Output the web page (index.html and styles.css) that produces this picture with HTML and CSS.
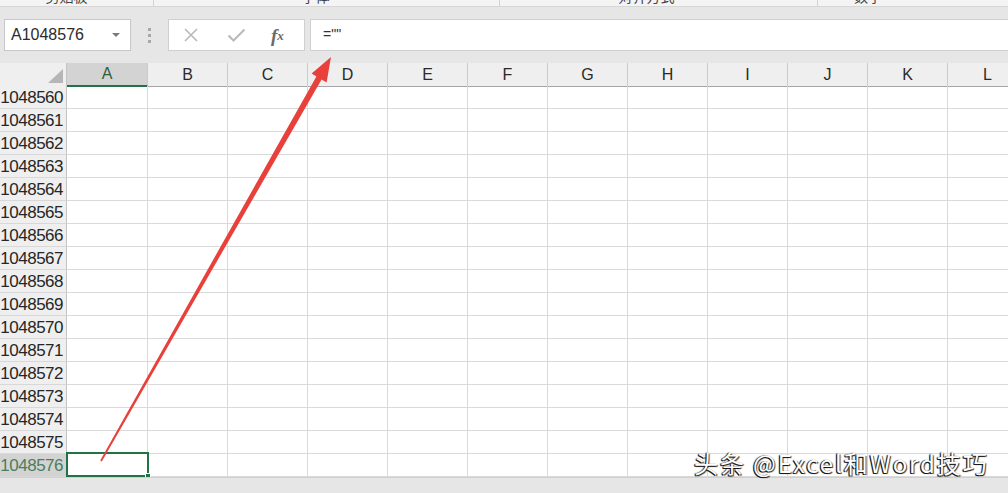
FILE: index.html
```html
<!DOCTYPE html>
<html lang="zh-CN">
<head>
<meta charset="utf-8">
<title>Excel</title>
<link rel="stylesheet" href="styles.css">
</head>
<body>
<div class="app">
  <div class="ribbon-tail">
    <div class="grp g1"><span>剪贴板</span></div>
    <div class="grp g2"><span>字体</span></div>
    <div class="grp g3"><span>对齐方式</span></div>
    <div class="grp g4"><span>数字</span></div>
  </div>

  <div class="fbar">
    <div class="namebox">
      <span class="ref">A1048576</span>
      <span class="caret"></span>
    </div>
    <div class="grip"><i></i><i></i><i></i></div>
    <div class="btns">
      <span class="btn cancel">
        <svg width="16" height="16" viewBox="0 0 16 16"><path d="M2 2L14 14M14 2L2 14" stroke="#b9b9b9" stroke-width="1.6" fill="none"/></svg>
      </span>
      <span class="btn ok">
        <svg width="19" height="16" viewBox="0 0 19 16"><path d="M1.5 8.5L6.5 13.5L17.5 2.5" stroke="#b9b9b9" stroke-width="2" fill="none"/></svg>
      </span>
      <span class="btn fx">f<sub>x</sub></span>
    </div>
    <div class="formula">=""</div>
  </div>

  <div class="sheet">
    <div class="row hdr">
      <div class="corner"><span class="tri"></span></div>
      <div class="ch sel">A</div><div class="ch">B</div><div class="ch">C</div><div class="ch">D</div>
      <div class="ch">E</div><div class="ch">F</div><div class="ch">G</div><div class="ch">H</div>
      <div class="ch">I</div><div class="ch">J</div><div class="ch">K</div><div class="ch">L</div>
    </div>
    <div class="row"><div class="rh">1048560</div><div class="c"></div><div class="c"></div><div class="c"></div><div class="c"></div><div class="c"></div><div class="c"></div><div class="c"></div><div class="c"></div><div class="c"></div><div class="c"></div><div class="c"></div><div class="c"></div></div>
    <div class="row"><div class="rh">1048561</div><div class="c"></div><div class="c"></div><div class="c"></div><div class="c"></div><div class="c"></div><div class="c"></div><div class="c"></div><div class="c"></div><div class="c"></div><div class="c"></div><div class="c"></div><div class="c"></div></div>
    <div class="row"><div class="rh">1048562</div><div class="c"></div><div class="c"></div><div class="c"></div><div class="c"></div><div class="c"></div><div class="c"></div><div class="c"></div><div class="c"></div><div class="c"></div><div class="c"></div><div class="c"></div><div class="c"></div></div>
    <div class="row"><div class="rh">1048563</div><div class="c"></div><div class="c"></div><div class="c"></div><div class="c"></div><div class="c"></div><div class="c"></div><div class="c"></div><div class="c"></div><div class="c"></div><div class="c"></div><div class="c"></div><div class="c"></div></div>
    <div class="row"><div class="rh">1048564</div><div class="c"></div><div class="c"></div><div class="c"></div><div class="c"></div><div class="c"></div><div class="c"></div><div class="c"></div><div class="c"></div><div class="c"></div><div class="c"></div><div class="c"></div><div class="c"></div></div>
    <div class="row"><div class="rh">1048565</div><div class="c"></div><div class="c"></div><div class="c"></div><div class="c"></div><div class="c"></div><div class="c"></div><div class="c"></div><div class="c"></div><div class="c"></div><div class="c"></div><div class="c"></div><div class="c"></div></div>
    <div class="row"><div class="rh">1048566</div><div class="c"></div><div class="c"></div><div class="c"></div><div class="c"></div><div class="c"></div><div class="c"></div><div class="c"></div><div class="c"></div><div class="c"></div><div class="c"></div><div class="c"></div><div class="c"></div></div>
    <div class="row"><div class="rh">1048567</div><div class="c"></div><div class="c"></div><div class="c"></div><div class="c"></div><div class="c"></div><div class="c"></div><div class="c"></div><div class="c"></div><div class="c"></div><div class="c"></div><div class="c"></div><div class="c"></div></div>
    <div class="row"><div class="rh">1048568</div><div class="c"></div><div class="c"></div><div class="c"></div><div class="c"></div><div class="c"></div><div class="c"></div><div class="c"></div><div class="c"></div><div class="c"></div><div class="c"></div><div class="c"></div><div class="c"></div></div>
    <div class="row"><div class="rh">1048569</div><div class="c"></div><div class="c"></div><div class="c"></div><div class="c"></div><div class="c"></div><div class="c"></div><div class="c"></div><div class="c"></div><div class="c"></div><div class="c"></div><div class="c"></div><div class="c"></div></div>
    <div class="row"><div class="rh">1048570</div><div class="c"></div><div class="c"></div><div class="c"></div><div class="c"></div><div class="c"></div><div class="c"></div><div class="c"></div><div class="c"></div><div class="c"></div><div class="c"></div><div class="c"></div><div class="c"></div></div>
    <div class="row"><div class="rh">1048571</div><div class="c"></div><div class="c"></div><div class="c"></div><div class="c"></div><div class="c"></div><div class="c"></div><div class="c"></div><div class="c"></div><div class="c"></div><div class="c"></div><div class="c"></div><div class="c"></div></div>
    <div class="row"><div class="rh">1048572</div><div class="c"></div><div class="c"></div><div class="c"></div><div class="c"></div><div class="c"></div><div class="c"></div><div class="c"></div><div class="c"></div><div class="c"></div><div class="c"></div><div class="c"></div><div class="c"></div></div>
    <div class="row"><div class="rh">1048573</div><div class="c"></div><div class="c"></div><div class="c"></div><div class="c"></div><div class="c"></div><div class="c"></div><div class="c"></div><div class="c"></div><div class="c"></div><div class="c"></div><div class="c"></div><div class="c"></div></div>
    <div class="row"><div class="rh">1048574</div><div class="c"></div><div class="c"></div><div class="c"></div><div class="c"></div><div class="c"></div><div class="c"></div><div class="c"></div><div class="c"></div><div class="c"></div><div class="c"></div><div class="c"></div><div class="c"></div></div>
    <div class="row"><div class="rh">1048575</div><div class="c"></div><div class="c"></div><div class="c"></div><div class="c"></div><div class="c"></div><div class="c"></div><div class="c"></div><div class="c"></div><div class="c"></div><div class="c"></div><div class="c"></div><div class="c"></div></div>
    <div class="row"><div class="rh sel">1048576</div><div class="c active"><span class="handle"></span></div><div class="c"></div><div class="c"></div><div class="c"></div><div class="c"></div><div class="c"></div><div class="c"></div><div class="c"></div><div class="c"></div><div class="c"></div><div class="c"></div><div class="c"></div></div>
  </div>

  <div class="bottom"></div>

  <svg class="arrow" width="1008" height="493" viewBox="0 0 1008 493">
    <polygon fill="#e8413b" points="331,57 326.6,82.4 321.6,79.4 101.8,461.5 100.2,460.5 316.4,76.4 311.6,73.6"/>
  </svg>

  <div class="watermark">头条 @Excel和Word技巧</div>
</div>
</body>
</html>
```

FILE: styles.css
```css
* { box-sizing: border-box; }

html, body {
  margin: 0;
  padding: 0;
  width: 1008px;
  height: 493px;
  overflow: hidden;
  background: #e6e6e6;
  font-family: "Liberation Sans", Arial, "Noto Sans CJK SC", sans-serif;
  color: #262626;
}

.app {
  position: relative;
  width: 1008px;
  height: 493px;
  overflow: hidden;
  display: flex;
  flex-direction: column;
}

/* bottom of the ribbon, cut off */
.ribbon-tail {
  height: 7px;
  flex: none;
  display: flex;
  background: #f4f4f4;
  border-bottom: 1px solid #d6d6d6;
  overflow: hidden;
}
.grp {
  height: 6px;
  overflow: hidden;
  border-right: 1px solid #d4d4d4;
  display: flex;
  justify-content: center;
  font-family: "Noto Sans CJK SC", sans-serif;
  font-size: 14px;
  color: #444;
}
.grp span { display: block; line-height: 14px; margin-top: -11px; }
.g1 { width: 154px; padding-right: 20px; }
.g2 { width: 346px; padding-right: 22px; }
.g3 { width: 318px; padding-right: 24px; }
.g4 { flex: 1; border-right: none; padding-right: 90px; }

/* formula bar */
.fbar {
  height: 56px;
  flex: none;
  display: flex;
  align-items: flex-start;
  padding: 12px 0 0 4px;
  background: #e6e6e6;
}
.namebox {
  width: 127px;
  height: 32px;
  background: #fff;
  border: 1px solid #c8c8c8;
  display: flex;
  align-items: center;
  justify-content: space-between;
  padding: 0 10px 0 6px;
  font-size: 16px;
  color: #2b2b2b;
}
.caret {
  width: 0; height: 0;
  border-left: 4px solid transparent;
  border-right: 4px solid transparent;
  border-top: 4px solid #7a7a7a;
}
.grip {
  width: 37px;
  height: 32px;
  display: flex;
  flex-direction: column;
  align-items: center;
  justify-content: center;
  gap: 3px;
}
.grip i {
  display: block;
  width: 3px; height: 3px;
  background: #a8a8a8;
}
.btns {
  width: 137px;
  height: 32px;
  background: #fff;
  border: 1px solid #cfcfcf;
  display: flex;
  align-items: center;
  padding-left: 14px;
}
.btn {
  display: flex;
  align-items: center;
}
.ok { margin-left: 28px; }
.fx {
  margin-left: 25px;
  font-family: "Liberation Serif", "DejaVu Serif", serif;
  font-style: italic;
  font-weight: bold;
  font-size: 19px;
  color: #6a6a6a;
  line-height: 1;
}
.fx sub { font-size: 13px; vertical-align: -2px; }
.formula {
  flex: 1;
  margin-left: 5px;
  margin-right: -20px;
  height: 32px;
  background: #fff;
  border: 1px solid #cfcfcf;
  padding: 5px 0 0 12px;
  font-size: 14px;
  line-height: 18px;
  color: #333;
}

/* sheet */
.sheet {
  flex: none;
  background: #fff;
  overflow: hidden;
}
.row {
  display: grid;
  grid-template-columns: 67px 81px repeat(11, 80px);
  height: 23px;
  width: 1028px;
}
.hdr { background: #efefef; }
.corner {
  background: #efefef;
  border-right: 1px solid #c4c4c4;
  border-bottom: 1px solid #a6a6a6;
  display: flex;
  align-items: flex-end;
  justify-content: flex-end;
  padding: 0 3px 3px 0;
}
.tri {
  width: 0; height: 0;
  border-left: 15px solid transparent;
  border-bottom: 14px solid #b6b6b6;
}
.ch {
  border-right: 1px solid #cbcbcb;
  border-bottom: 1px solid #a6a6a6;
  text-align: center;
  font-size: 16px;
  line-height: 23px;
  color: #2a2a2a;
}
.ch.sel {
  background: #d3d3d3;
  border-bottom: 2px solid #217346;
  color: #2e5e40;
  line-height: 22px;
}
.rh {
  background: #efefef;
  border-right: 1px solid #c4c4c4;
  border-bottom: 1px solid #d8d8d8;
  text-align: right;
  padding-right: 3px;
  font-size: 17px;
  letter-spacing: -0.5px;
  line-height: 23px;
  color: #262626;
  overflow: hidden;
  white-space: nowrap;
}
.rh.sel {
  background: #d3d3d3;
  color: #4b7d5c;
}
.c {
  border-right: 1px solid #dadada;
  border-bottom: 1px solid #dadada;
}
.c.active { position: relative; }
.c.active::after {
  content: "";
  position: absolute;
  left: -1px; top: -2px; right: -2px; bottom: -1px;
  border: 2px solid #217346;
}
.handle {
  position: absolute;
  right: -4px; bottom: -3px;
  width: 6px; height: 6px;
  background: #217346;
  border: 1px solid #fff;
  z-index: 2;
}

.bottom {
  flex: 1;
  background: #e6e6e6;
  border-top: 1px solid #d0d0d0;
}

/* overlays */
.arrow {
  position: absolute;
  left: 0; top: 0;
  pointer-events: none;
}
.watermark {
  position: absolute;
  left: 694px;
  top: 447px;
  font-family: "Noto Sans CJK SC", sans-serif;
  font-size: 24px;
  line-height: 32px;
  letter-spacing: 1.9px;
  color: #fff;
  white-space: nowrap;
  text-shadow: -1px 1px 0 #1a1a1a, 1px 1px 1px #333, -1px 0 1px #222;
}
```
